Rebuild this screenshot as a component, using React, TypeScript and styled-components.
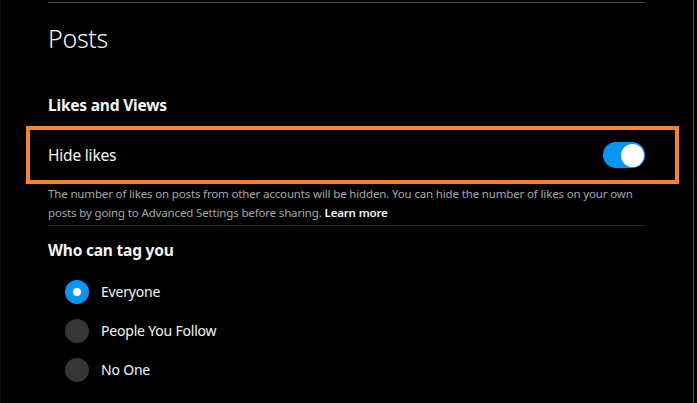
import React from "react";
import styled, { createGlobalStyle } from "styled-components";

const GlobalStyle = createGlobalStyle`
  html, body {
    margin: 0;
    padding: 0;
    background: #000;
  }
  body {
    font-family: "Noto Sans", "Open Sans", sans-serif;
    color: #f5f5f5;
  }
  * { box-sizing: border-box; }
`;

const Frame = styled.div`
  width: 697px;
  height: 403px;
  background: #000;
  display: flex;
  overflow: hidden;
`;

const Panel = styled.div`
  width: 694px;
  height: 100%;
  border-left: 1px solid #101010;
  border-right: 1px solid #5a5a5a;
  padding: 2px 48px 0 47px;
  display: flex;
  flex-direction: column;
`;

const Divider = styled.hr<{ $top?: number }>`
  margin: ${(p) => p.$top ?? 0}px 0 0 0;
  border: none;
  height: 1px;
  background: ${(p) => (p.$top ? "#2e2e2e" : "#4a4a4a")};
  flex-shrink: 0;
`;

const Title = styled.h1`
  margin: 19px 0 0 0;
  font-size: 25px;
  line-height: 32px;
  font-weight: 300;
  letter-spacing: -0.3px;
`;

const SectionHeading = styled.h2<{ $top: number }>`
  margin: ${(p) => p.$top}px 0 0 0;
  font-size: 15.5px;
  line-height: 20px;
  font-weight: 700;
  letter-spacing: -0.2px;
`;

const Highlight = styled.div`
  margin: 11px -34px 0 -22px;
  border: 4px solid #f5842c;
  padding: 0 30px 0 18px;
  height: 58px;
  display: flex;
  align-items: center;
  justify-content: space-between;
`;

const RowLabel = styled.span`
  font-size: 15.5px;
  letter-spacing: -0.2px;
`;

const Toggle = styled.div<{ $on: boolean }>`
  width: 42px;
  height: 26px;
  border-radius: 13px;
  background: ${(p) => (p.$on ? "#0a95f5" : "#363636")};
  display: flex;
  align-items: center;
  justify-content: ${(p) => (p.$on ? "flex-end" : "flex-start")};
  padding: 0 1px;
`;

const Knob = styled.div`
  width: 23px;
  height: 23px;
  border-radius: 50%;
  background: #fff;
`;

const Description = styled.p`
  margin: 0;
  font-size: 11.5px;
  line-height: 19px;
  color: #a8a8a8;
  letter-spacing: -0.15px;
`;

const LearnMore = styled.a`
  color: #f5f5f5;
  font-weight: 600;
  text-decoration: none;
`;

const RadioList = styled.div`
  margin-top: 12px;
  display: flex;
  flex-direction: column;
`;

const RadioRow = styled.label`
  height: 39px;
  display: flex;
  align-items: center;
  gap: 12px;
  padding-left: 17px;
  font-size: 14px;
  letter-spacing: -0.2px;
`;

const RadioCircle = styled.span<{ $checked: boolean }>`
  width: 24px;
  height: 24px;
  border-radius: 50%;
  background: ${(p) => (p.$checked ? "#0a95f5" : "#363636")};
  display: flex;
  align-items: center;
  justify-content: center;
  flex-shrink: 0;
  &::after {
    content: "";
    width: 8px;
    height: 8px;
    border-radius: 50%;
    background: #fff;
    display: ${(p) => (p.$checked ? "block" : "none")};
  }
`;

const options = ["Everyone", "People You Follow", "No One"];

export default function App() {
  return (
    <>
      <GlobalStyle />
      <Frame>
        <Panel>
          <Divider />
          <Title>Posts</Title>
          <SectionHeading $top={41}>Likes and Views</SectionHeading>
          <Highlight>
            <RowLabel>Hide likes</RowLabel>
            <Toggle $on>
              <Knob />
            </Toggle>
          </Highlight>
          <Description>
            The number of likes on posts from other accounts will be hidden. You can hide the number of likes on your own
            posts by going to Advanced Settings before sharing.{" "}
            <LearnMore href="#">Learn more</LearnMore>
          </Description>
          <Divider $top={3} />
          <SectionHeading $top={14}>Who can tag you</SectionHeading>
          <RadioList>
            {options.map((o, i) => (
              <RadioRow key={o}>
                <RadioCircle $checked={i === 0} />
                {o}
              </RadioRow>
            ))}
          </RadioList>
        </Panel>
      </Frame>
    </>
  );
}
